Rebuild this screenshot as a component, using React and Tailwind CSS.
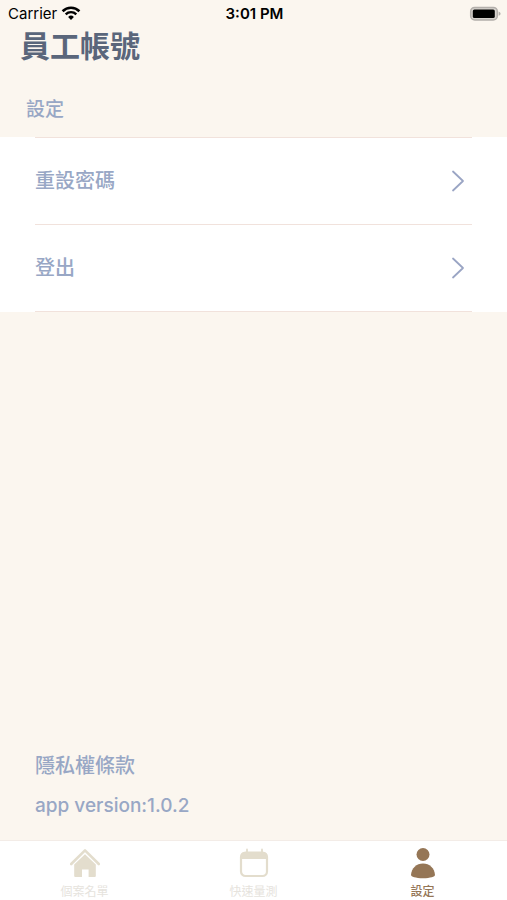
import React, { useState } from 'react';

const HomeIcon = () => (
  <svg className="w-8 h-8" viewBox="0 0 32 32" fill="none" aria-hidden="true">
    <path d="M2.2 17 L16 3.4 L29.8 17" stroke="#e3ddcd" strokeWidth="2.6" strokeLinejoin="round" strokeLinecap="round" />
    <path d="M16 7.2 L26.8 17.6 V29 Q26.8 30 25.8 30 H19.6 V22.4 H13 V30 H6.2 Q5.2 30 5.2 29 V17.6 Z" fill="#e3ddcd" />
  </svg>
);

const CalendarIcon = () => (
  <svg className="w-8 h-8" viewBox="0 0 32 32" fill="none" aria-hidden="true">
    <path d="M9 2.5 V6 M24 2.5 V6" stroke="#e3ddcd" strokeWidth="1.8" strokeLinecap="round" />
    <path d="M3 12 V9 Q3 5 7 5 H25 Q29 5 29 9 V12 Z" fill="#e3ddcd" />
    <rect x="3" y="5.5" width="26" height="23.5" rx="4.5" stroke="#e3ddcd" strokeWidth="2.2" />
  </svg>
);

const PersonIcon = () => (
  <svg className="w-8 h-8" viewBox="0 0 32 32" fill="#957656" aria-hidden="true">
    <circle cx="16" cy="7.5" r="6.5" />
    <path d="M4 28 C4.5 21 9.5 16.4 16 16.4 C22.5 16.4 27.5 21 28 28 C28 29.6 23.5 31.2 16 31.2 C8.5 31.2 4 29.6 4 28 Z" />
  </svg>
);

const ChevronIcon = () => (
  <svg className="w-4 h-6" viewBox="0 0 16 24" fill="none" stroke="#9aa5c4" strokeWidth="1.8" aria-hidden="true">
    <path d="M3 2.5 L13 12 L3 21.5" strokeLinecap="round" strokeLinejoin="round" />
  </svg>
);

const WifiIcon = () => (
  <svg className="w-5 h-4" viewBox="0 0 20 16" fill="none" stroke="#000" aria-hidden="true">
    <path d="M1.6 5.2 A12 12 0 0 1 18.4 5.2" strokeWidth="2.6" />
    <path d="M4.7 8.3 A7.6 7.6 0 0 1 15.3 8.3" strokeWidth="2.4" />
    <path d="M10 14 L7.1 10.9 A4.2 4.2 0 0 1 12.9 10.9 Z" fill="#000" stroke="none" />
  </svg>
);

const BatteryIcon = () => (
  <svg className="w-8 h-4" viewBox="0 0 32 16" aria-hidden="true">
    <rect x="1.7" y="1.4" width="26.6" height="12.6" rx="4" fill="#d6d2cd" stroke="#b3afab" strokeWidth="1.5" />
    <rect x="3.8" y="3.4" width="22" height="8.6" rx="1.6" fill="#000" />
    <path d="M29.6 5.6 Q31.6 6.4 31.6 7.7 Q31.6 9 29.6 9.8 Z" fill="#b3afab" />
  </svg>
);

const StatusBar = () => (
  <div className="grid grid-cols-3 items-center h-7 pl-2 pr-1.5 text-[15px] text-black">
    <div className="flex items-center gap-1">
      <span>Carrier</span>
      <WifiIcon />
    </div>
    <span className="text-center font-semibold">3:01 PM</span>
    <div className="flex justify-end">
      <BatteryIcon />
    </div>
  </div>
);

const settings = [
  { id: 'password', label: '重設密碼' },
  { id: 'logout', label: '登出' },
];

const tabs = [
  { id: 'cases', label: '個案名單', Icon: HomeIcon },
  { id: 'measure', label: '快速量測', Icon: CalendarIcon },
  { id: 'settings', label: '設定', Icon: PersonIcon },
];

const App = () => {
  const [activeTab, setActiveTab] = useState('settings');

  return (
    <div className="min-h-screen flex flex-col bg-[#fbf6ef] text-[#98a7c5] font-[Inter,'Noto_Sans_CJK_TC',sans-serif]">
      <StatusBar />

      <main className="flex-1 flex flex-col">
        <h1 className="px-5 text-3xl leading-9 font-bold text-[#5a667b]">員工帳號</h1>
        <h2 className="mt-8 mb-[13px] px-[26px] text-[19px] leading-7 font-medium">設定</h2>

        {/* Settings list */}
        <ul className="bg-white px-[35px]">
          {settings.map((item) => (
            <li key={item.id} className="border-t border-[#f1e2dc] last:border-b">
              <button
                type="button"
                className="w-full h-[86px] flex items-center justify-between pr-1.5 text-xl font-medium cursor-pointer"
              >
                <span>{item.label}</span>
                <ChevronIcon />
              </button>
            </li>
          ))}
        </ul>

        {/* Footer */}
        <div className="mt-auto px-[35px] pb-5 font-medium">
          <a href="#privacy" className="block mb-3 text-xl leading-7">隱私權條款</a>
          <p className="text-[19px] leading-7">app version:1.0.2</p>
        </div>
      </main>

      {/* Tab bar */}
      <nav className="grid grid-cols-3 bg-white border-t border-[#f3ece7]">
        {tabs.map(({ id, label, Icon }) => (
          <button
            key={id}
            type="button"
            onClick={() => setActiveTab(id)}
            className={`flex flex-col items-center gap-[5px] pt-1.5 text-xs leading-4 cursor-pointer ${
              activeTab === id ? 'text-[#957656] font-medium' : 'text-[#e6e3dd]'
            }`}
          >
            <Icon />
            <span>{label}</span>
          </button>
        ))}
      </nav>
    </div>
  );
};

export default App;
